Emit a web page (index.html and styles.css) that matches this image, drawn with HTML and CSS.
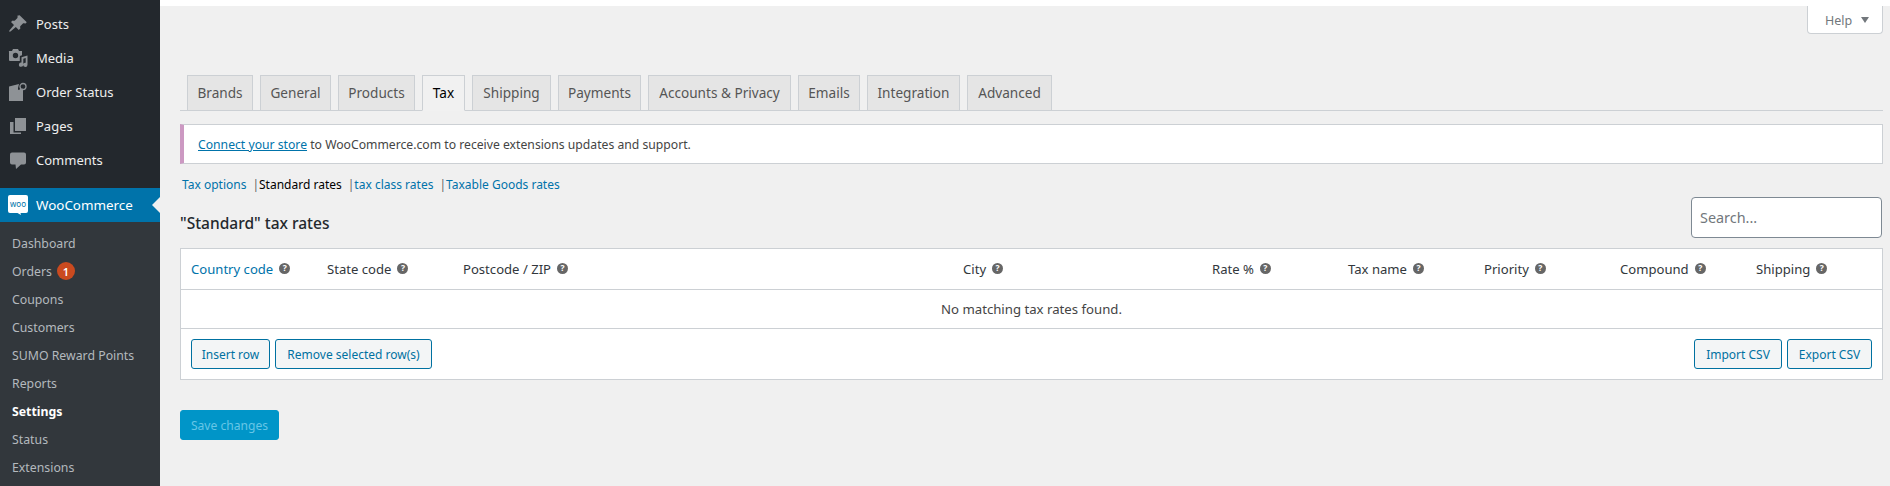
FILE: index.html
```html
<!DOCTYPE html>
<html lang="en">
<head>
<meta charset="utf-8">
<title>Tax settings</title>
<link rel="stylesheet" href="styles.css">
</head>
<body>
<div class="app">
  <aside class="sidebar">
    <ul class="menu">
      <li class="menu-item"><svg class="icon" viewBox="0 0 20 20"><path d="M11.600 1.200l7.200 7-1.700 1.500c-.8-.6-1.700-.6-2.400 0l-2 2c-.7.700-.8 1.700-.2 2.500l-1.700 1.700-3-3-5.300 4.600-1.300.2.200-1.300 4.600-5.300-3-3 1.700-1.700c.8.600 1.800.5 2.500-.2l2-2c.6-.7.6-1.600 0-2.400z"/></svg><span>Posts</span></li>
      <li class="menu-item"><svg class="icon" viewBox="0 0 20 20"><path fill-rule="evenodd" d="M1 3h3l1-2h5l1 2h3v4.300l-1.500.4a1 1 0 0 0-.7 1V13H2a1 1 0 0 1-1-1V4a1 1 0 0 1 0-1zM7.500 4.800a2.700 2.700 0 1 0 0 5.400 2.700 2.700 0 0 0 0-5.400z"/><path d="M13.500 9.200l6-1.700v9.300a2.200 2.200 0 1 1-1.800-2.100v-4.700l-2.400.7v5.900a2.200 2.200 0 1 1-1.800-2.100z"/></svg><span>Media</span></li>
      <li class="menu-item"><svg class="icon" viewBox="0 0 20 20"><path d="M1 4.500l10-2.500-1 4v1.800l3 .2 2-1.500V19H1z"/><circle cx="15" cy="4.500" r="3" fill="none" stroke="currentColor" stroke-width="1.300"/><path d="M13 7l-2.500 3" fill="none" stroke="currentColor" stroke-width="1.300"/></svg><span>Order Status</span></li>
      <li class="menu-item"><svg class="icon" viewBox="0 0 20 20"><path d="M7 2h11v13H7z"/><path d="M2 6h3.500v10.500H13V18H2z"/></svg><span>Pages</span></li>
      <li class="menu-item"><svg class="icon" viewBox="0 0 20 20"><path d="M4 2.500h12a2 2 0 0 1 2 2v8a2 2 0 0 1-2 2h-3l-5 4.500-.5-4.500H4a2 2 0 0 1-2-2v-8a2 2 0 0 1 2-2z"/></svg><span>Comments</span></li>
    </ul>
    <div class="woo-row">
      <svg class="woo-logo" viewBox="0 0 20 20"><path class="woo-bubble" d="M2 0h16a2 2 0 0 1 2 2v14a2 2 0 0 1-2 2h-5.500l.5 2-3.500-2H2a2 2 0 0 1-2-2V2a2 2 0 0 1 2-2z"/><text class="woo-mark" x="10" y="11.500" text-anchor="middle">woo</text></svg>
      <span>WooCommerce</span>
    </div>
    <ul class="submenu">
      <li>Dashboard</li>
      <li>Orders <span class="badge">1</span></li>
      <li>Coupons</li>
      <li>Customers</li>
      <li>SUMO Reward Points</li>
      <li>Reports</li>
      <li class="current">Settings</li>
      <li>Status</li>
      <li>Extensions</li>
    </ul>
  </aside>
  <main class="main">
    <div class="topbar"></div>
    <div class="help-row"><div class="help-tab">Help <span class="caret"></span></div></div>
    <nav class="tabs">
      <a class="tab tab-brands">Brands</a>
      <a class="tab tab-general">General</a>
      <a class="tab tab-products">Products</a>
      <a class="tab tab-tax active">Tax</a>
      <a class="tab tab-shipping">Shipping</a>
      <a class="tab tab-payments">Payments</a>
      <a class="tab tab-accounts">Accounts &amp; Privacy</a>
      <a class="tab tab-emails">Emails</a>
      <a class="tab tab-integration">Integration</a>
      <a class="tab tab-advanced">Advanced</a>
    </nav>
    <div class="notice"><a class="link underlined">Connect your store</a> to WooCommerce.com to receive extensions updates and support.</div>
    <div class="sublinks">
      <a class="link">Tax options</a><span class="sep">|</span><strong class="sub-current">Standard rates</strong><span class="sep">|</span><a class="link">tax class rates</a><span class="sep">|</span><a class="link">Taxable Goods rates</a>
    </div>
    <div class="title-row">
      <h2 class="title">"Standard" tax rates</h2>
      <input class="search" type="text" placeholder="Search...">
    </div>
    <section class="panel">
      <div class="head-row">
        <div class="th link-th">Country code <i class="tip">?</i></div>
        <div class="th">State code <i class="tip">?</i></div>
        <div class="th">Postcode / ZIP <i class="tip">?</i></div>
        <div class="th">City <i class="tip">?</i></div>
        <div class="th">Rate % <i class="tip">?</i></div>
        <div class="th">Tax name <i class="tip">?</i></div>
        <div class="th">Priority <i class="tip">?</i></div>
        <div class="th">Compound <i class="tip">?</i></div>
        <div class="th">Shipping <i class="tip">?</i></div>
      </div>
      <div class="empty-row">No matching tax rates found.</div>
      <div class="foot-row">
        <div class="btn-group"><button class="btn btn-insert">Insert row</button><button class="btn btn-remove">Remove selected row(s)</button></div>
        <div class="btn-group"><button class="btn btn-import">Import CSV</button><button class="btn btn-export">Export CSV</button></div>
      </div>
    </section>
    <button class="save">Save changes</button>
  </main>
</div>
</body>
</html>
```

FILE: styles.css
```css
* { box-sizing: border-box; }
html, body { margin: 0; padding: 0; height: 486px; overflow: hidden; }
body { font-family: "Noto Sans", "Open Sans", sans-serif; font-size: 12.5px; color: #444; background: #f0f0f0; }
ul { list-style: none; margin: 0; padding: 0; }
.app { display: flex; height: 486px; }

.sidebar { width: 160px; flex: none; background: #23282d; color: #eee; padding-top: 7px; height: 486px; overflow: hidden; }
.menu { margin-bottom: 11px; }
.menu-item { display: flex; align-items: center; height: 34px; color: #eee; font-size: 13px; }
.icon { width: 20px; height: 20px; margin-left: 8px; margin-right: 8px; fill: #8e9296; color: #8e9296; flex: none; }
.woo-row { position: relative; display: flex; align-items: center; height: 34px; background: #0073aa; color: #fff; font-size: 13.400px; }
.woo-row::after { content: ""; position: absolute; right: 0; top: 9px; border: 8px solid transparent; border-right-color: #f0f0f0; border-left-width: 0; }
.woo-logo { width: 20px; height: 20px; margin: 0 8px; flex: none; }
.woo-bubble { fill: #fff; }
.woo-mark { fill: #0073aa; font-size: 8px; font-family: "Noto Sans", sans-serif; }
.submenu { background: #32373c; padding-top: 7px; height: 264px; color: #b4b9be; font-size: 12.300px; }
.submenu li { display: flex; align-items: center; gap: 5px; height: 28px; padding-left: 12px; }
.submenu .current { color: #fff; font-weight: 700; }
.badge { display: inline-flex; align-items: center; justify-content: center; width: 18px; height: 18px; border-radius: 50%; background: #ca4a1f; color: #fff; font-size: 11px; font-weight: 600; }

.main { flex: 1; min-width: 0; padding: 0 7px 0 20px; position: relative; }
.topbar { height: 6px; margin: 0 -7px 0 -20px; background: #fff; }
.help-row { display: flex; justify-content: flex-end; height: 28px; }
.help-tab { width: 76px; height: 28px; padding-left: 17px; background: #fff; border: 1px solid #ccd0d4; border-top: 0; border-radius: 0 0 4px 4px; color: #72777c; font-size: 12.500px; line-height: 29px; }
.caret { display: inline-block; margin-left: 6px; vertical-align: 2px; border: 4px solid transparent; border-top: 6px solid #72777c; border-bottom: 0; }

.tabs { display: flex; gap: 7px; height: 36px; margin-top: 41px; padding-left: 7px; border-bottom: 1px solid #ccd0d4; }
.tab { display: flex; align-items: center; justify-content: center; height: 36px; background: #e5e5e5; border: 1px solid #ccd0d4; color: #555; font-size: 13.600px; font-weight: 400; padding-bottom: 1px; }
.tab.active { background: #f1f1f1; color: #000; border-bottom-color: #f1f1f1; }
.tab-brands { width: 66px; }
.tab-general { width: 71px; }
.tab-products { width: 77px; }
.tab-tax { width: 43px; }
.tab-shipping { width: 79px; }
.tab-payments { width: 83px; }
.tab-accounts { width: 143px; }
.tab-emails { width: 62px; }
.tab-integration { width: 93px; }
.tab-advanced { width: 85px; }

.notice { height: 40px; margin-top: 13px; padding-left: 14px; display: flex; align-items: center; white-space: pre; background: #fff; border: 1px solid #ccd0d4; border-left: 4px solid #cc99c2; font-size: 12.200px; color: #444; }
.link { color: #0073aa; }
.underlined { text-decoration: underline; }
.sublinks { display: flex; align-items: center; height: 20px; margin-top: 10px; padding-left: 2px; font-size: 12px; }
.sep { margin: 0 0 0 6px; color: #666; }
.sub-current { color: #000; font-weight: 400; }
.title-row { display: flex; justify-content: space-between; height: 41px; margin-top: 3px; }
.title { margin: 16px 0 0; font-size: 15.500px; font-weight: 500; color: #23282d; line-height: 20px; }
.search { width: 191px; height: 41px; margin-right: 1px; padding: 0 8px; border: 1px solid #7e8993; border-radius: 4px; background: #fff; font: inherit; font-size: 14.400px; color: #32373c; }
.search::placeholder { color: #72777c; opacity: 1; }

.panel { margin-top: 10px; background: #fff; border: 1px solid #ccd0d4; }
.head-row { display: grid; grid-template-columns: 136px 136px 500px 249px 136px 136px 136px 136px 1fr; align-items: center; height: 41px; padding-left: 10px; border-bottom: 1px solid #ccd0d4; }
.th { display: flex; align-items: center; gap: 6px; color: #32373c; font-size: 13.100px; padding-bottom: 1px; }
.link-th { color: #0073aa; }
.tip { display: inline-flex; align-items: center; justify-content: center; width: 11px; height: 11px; border-radius: 50%; background: #666; color: #fff; font-size: 8.500px; font-weight: 700; font-style: normal; line-height: 1; }
.empty-row { height: 39px; display: flex; align-items: center; justify-content: center; border-bottom: 1px solid #ccd0d4; color: #444; font-size: 13.200px; }
.foot-row { display: flex; justify-content: space-between; align-items: flex-start; height: 50px; padding: 10px 10px 0; }
.btn-group { display: flex; gap: 5px; }
.btn { height: 30px; padding: 0; border: 1px solid #0071a1; border-radius: 3px; background: #f3f5f6; color: #0071a1; font: inherit; font-size: 12px; }
.btn-insert { width: 79px; }
.btn-remove { width: 157px; }
.btn-import { width: 88px; }
.btn-export { width: 85px; }
.save { display: block; width: 99px; height: 30px; margin-top: 30px; padding: 0; border: 1px solid #0095c8; border-radius: 3px; background: #0095c8; color: #66c6e6; font: inherit; font-size: 12.100px; }
```
